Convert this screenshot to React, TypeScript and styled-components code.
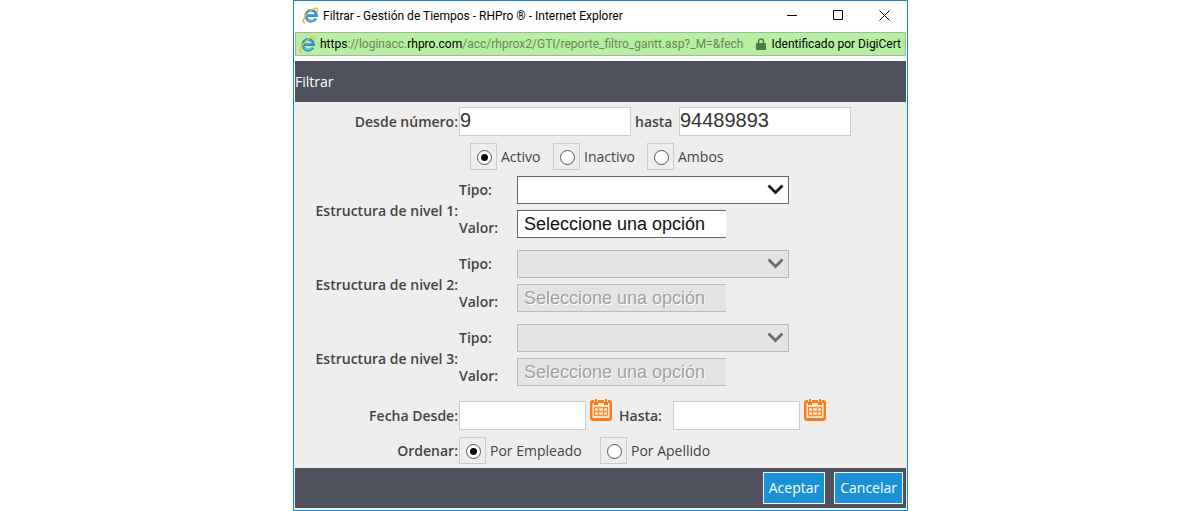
import React, { useState } from "react";
import styled, { createGlobalStyle } from "styled-components";

const chromeFont = `Roboto, "Open Sans", sans-serif`;
const formFont = `"Open Sans", "Noto Sans", sans-serif`;
const fieldFont = `"Liberation Sans", Arial, sans-serif`;

const GlobalStyle = createGlobalStyle`
  *, *::before, *::after { box-sizing: border-box; }
  body { margin: 0; background: #fff; font-family: ${formFont}; color: #444; }
`;

const Page = styled.main`
  display: flex;
  justify-content: center;
  padding-left: 1px;
`;

const Window = styled.div`
  width: 100%;
  max-width: 615px;
  border: 1px solid #1883d7;
  background: #fff;
`;

const TitleBar = styled.header`
  display: flex;
  align-items: center;
  height: 31px;
  padding: 0 13px 2px 8px;
  gap: 4px;
  font-family: ${chromeFont};
`;

const Title = styled.h1`
  flex: 1;
  margin: 0;
  font-size: 12px;
  font-weight: 400;
  line-height: 16px;
  color: #000;
  white-space: nowrap;
  overflow: hidden;
`;

const WindowControls = styled.div`
  display: flex;
  gap: 26px;
`;

const WindowButton = styled.button`
  display: flex;
  align-items: center;
  justify-content: center;
  width: 20px;
  height: 20px;
  padding: 0;
  border: 0;
  background: none;
`;

const AddressBar = styled.div`
  display: flex;
  align-items: center;
  height: 24px;
  margin: 0 1px 5px;
  padding: 0 4px 0 3px;
  gap: 4px;
  border: 1px solid #a9b3a5;
  background: #b4f0a0;
  font-family: ${chromeFont};
  font-size: 12px;
  line-height: 16px;
  color: #000;
  white-space: nowrap;
`;

const Url = styled.span`
  flex: 1;
  color: #6b8464;
`;

const Host = styled.span`
  color: #000;
`;

const Identity = styled.span`
  display: flex;
  align-items: center;
  gap: 6px;
`;

const SectionBar = styled.div`
  display: flex;
  align-items: center;
  height: 41px;
  margin: 0 1px;
  background: #4e525d;
`;

const SectionTitle = styled.h2`
  margin: 0;
  font-size: 14px;
  font-weight: 400;
  line-height: 20px;
  color: #fff;
`;

const Form = styled.form`
  background: #eee;
  padding-bottom: 2px;
`;

const Fields = styled.div`
  display: grid;
  grid-template-columns: 165px 1fr;
  padding: 5px 0 4px;
  font-size: 14px;
  line-height: 20px;
`;

const RowLabel = styled.span<{ $drop?: boolean }>`
  align-self: center;
  padding: ${(p) => (p.$drop ? "8px 1px 0 0" : "0 1px 0 0")};
  font-weight: 600;
  text-align: right;
  white-space: nowrap;
`;

const Row = styled.div<{ $indent?: number }>`
  display: flex;
  align-items: center;
  grid-column: 2;
  margin-left: ${(p) => p.$indent ?? 0}px;
`;

const Spacer = styled.div<{ $size: number }>`
  grid-column: 1 / -1;
  height: ${(p) => p.$size}px;
`;

const TextInput = styled.input<{ $width: number }>`
  width: ${(p) => p.$width}px;
  height: 29px;
  padding: 0 0 3px;
  border: 1px solid #ccc;
  border-radius: 0;
  background: #fff;
  font-family: ${fieldFont};
  font-size: 20px;
  color: #333;
`;

const InlineLabel = styled.label<{ $width: number; $indent: number }>`
  width: ${(p) => p.$width}px;
  padding-left: ${(p) => p.$indent}px;
  font-weight: 600;
`;

const Choice = styled.label<{ $width: number }>`
  display: flex;
  align-items: center;
  width: ${(p) => p.$width}px;
  gap: 4px;
  white-space: nowrap;
`;

const RadioBox = styled.span`
  width: 27px;
  height: 27px;
  flex: none;
  padding: 6px 4px 4px 6px;
  border: 1px solid #ccc;
`;

const Radio = styled.input`
  display: block;
  appearance: none;
  width: 15px;
  height: 15px;
  margin: 0;
  border: 1px solid #555;
  border-radius: 50%;
  background: #fff;
  &:checked {
    background: radial-gradient(circle, #000 0 3px, #fff 4px);
  }
`;

const Level = styled.div`
  display: grid;
  grid-template-columns: 58px minmax(0, 272px);
  row-gap: 6px;
`;

const LevelLabel = styled.label<{ $drop?: boolean }>`
  align-self: center;
  padding-top: ${(p) => (p.$drop ? 8 : 0)}px;
  font-weight: 600;
`;

const SelectWrap = styled.div`
  position: relative;
`;

const Select = styled.select`
  display: block;
  appearance: none;
  width: 100%;
  height: 28px;
  border: 1px solid #666;
  border-radius: 0;
  background: #fff;
  &:disabled {
    border-color: #b9b9b9;
    background: #e4e4e4;
    opacity: 1;
  }
`;

const SelectArrow = styled.svg`
  position: absolute;
  top: 8px;
  right: 5px;
  pointer-events: none;
`;

const ValueSelect = styled(Select)`
  width: 209px;
  padding: 0 6px;
  border-right: 0;
  font-family: ${fieldFont};
  font-size: 18px;
  color: #111;
  &:disabled {
    color: #a0a0a0;
    text-shadow: 1px 1px 0 #fff;
  }
`;

const CalendarButton = styled.button`
  display: block;
  align-self: flex-start;
  width: 22px;
  height: 22px;
  margin: -2px 0 0 4px;
  padding: 0;
  border: 0;
  background: none;
`;

const Footer = styled.footer`
  display: flex;
  justify-content: flex-end;
  height: 40px;
  gap: 9px;
  margin: 0 1px;
  padding: 4px 3px 0 0;
  background: #4e525d;
`;

const Action = styled.button`
  height: 32px;
  padding: 0 5px;
  border: 1px solid #f5f5f5;
  background: #1991d6;
  font-family: ${formFont};
  font-size: 14px;
  line-height: 20px;
  color: #fff;
`;

function BrowserIcon() {
  return (
    <svg width="17" height="17" viewBox="0 0 17 17" fill="none" aria-hidden="true">
      <path d="M14 11.300a5.400 5.400 0 1 1 .600-2.700H4.400" stroke="#2f93dc" strokeWidth="2.800" />
      <path d="M13.500 11a5.200 5.200 0 0 1-8.700.900" stroke="#7cccf5" strokeWidth="1" />
      <path d="M3.200 15.700C.8 16.400.4 14 2.600 10.400 5 6.500 9.800 2.200 13.400 1.300c2.400-.6 2.900 1.300 1.800 3.500" stroke="#f0b92c" strokeWidth="1.500" />
    </svg>
  );
}

function LockIcon() {
  return (
    <svg width="10" height="12" viewBox="0 0 10 12" aria-hidden="true">
      <path d="M2.500 5.500V3.500a2.500 2.500 0 0 1 5 0v2" fill="none" stroke="#4f7847" strokeWidth="1.500" />
      <rect y="5" width="10" height="7" rx="1" fill="#4f7847" />
    </svg>
  );
}

function CalendarIcon() {
  return (
    <svg width="22" height="22" viewBox="0 0 22 22" aria-hidden="true">
      <rect y="1" width="22" height="21" rx="3" fill="#ff7a14" />
      <path d="M2.500 4h17v15h-17z" fill="#fff1e4" />
      <path d="M4 0h4v6H4zM14 0h4v6h-4z" fill="#ff7a14" />
      <path d="M4 0h1v3H4zM7 0h1v3H7zM14 0h1v3h-1zM17 0h1v3h-1z" fill="#ffe6d0" />
      <path d="M4.500 8.500h13v8h-13zM4.500 12.500h13M8.500 8.500v8M13.500 8.500v8" fill="none" stroke="#ff8a30" strokeWidth="1.300" />
    </svg>
  );
}

function Arrow({ color }: { color: string }) {
  return (
    <SelectArrow width="17" height="13" viewBox="0 0 17 13" aria-hidden="true">
      <path d="M1.500 1.500l7 7 7-7" fill="none" stroke={color} strokeWidth="2.800" />
    </SelectArrow>
  );
}

function RadioChoice(props: { name: string; text: string; width: number; checked: boolean; onSelect: () => void }) {
  return (
    <Choice $width={props.width}>
      <RadioBox>
        <Radio type="radio" name={props.name} checked={props.checked} onChange={props.onSelect} />
      </RadioBox>
      {props.text}
    </Choice>
  );
}

function LevelFields({ level, disabled }: { level: number; disabled: boolean }) {
  return (
    <>
      <RowLabel $drop>Estructura de nivel {level}:</RowLabel>
      <Level>
        <LevelLabel htmlFor={`tipo-${level}`}>Tipo:</LevelLabel>
        <SelectWrap>
          <Select id={`tipo-${level}`} disabled={disabled}>
            <option value="" />
          </Select>
          <Arrow color={disabled ? "#6e6e6e" : "#1a1a1a"} />
        </SelectWrap>
        <LevelLabel $drop htmlFor={`valor-${level}`}>Valor:</LevelLabel>
        <ValueSelect id={`valor-${level}`} disabled={disabled}>
          <option>Seleccione una opción</option>
        </ValueSelect>
      </Level>
    </>
  );
}

export default function App() {
  const [status, setStatus] = useState("Activo");
  const [order, setOrder] = useState("Por Empleado");

  return (
    <Page>
      <GlobalStyle />
      <Window>
        <TitleBar>
          <BrowserIcon />
          <Title>Filtrar - Gestión de Tiempos - RHPro ® - Internet Explorer</Title>
          <WindowControls>
            <WindowButton type="button" aria-label="Minimizar">
              <svg width="11" height="11" stroke="#000"><path d="M0 5.500h10" /></svg>
            </WindowButton>
            <WindowButton type="button" aria-label="Maximizar">
              <svg width="11" height="11" stroke="#000" fill="none"><path d="M.5.5h9v9h-9z" /></svg>
            </WindowButton>
            <WindowButton type="button" aria-label="Cerrar">
              <svg width="11" height="11" stroke="#000"><path d="M.5.5l10 10M10.500.5l-10 10" /></svg>
            </WindowButton>
          </WindowControls>
        </TitleBar>
        <AddressBar>
          <BrowserIcon />
          <Url>
            <Host>https</Host>://loginacc.<Host>rhpro.com</Host>/acc/rhprox2/GTI/reporte_filtro_gantt.asp?_M=&amp;fech
          </Url>
          <Identity>
            <LockIcon />
            Identificado por DigiCert
          </Identity>
        </AddressBar>
        <SectionBar>
          <SectionTitle>Filtrar</SectionTitle>
        </SectionBar>
        <Form onSubmit={(e) => e.preventDefault()}>
          <Fields>
            <RowLabel as="label" htmlFor="desde">Desde número:</RowLabel>
            <Row>
              <TextInput id="desde" $width={172} defaultValue="9" />
              <InlineLabel htmlFor="hasta" $width={48} $indent={4}>hasta</InlineLabel>
              <TextInput id="hasta" $width={172} defaultValue="94489893" />
            </Row>
            <Spacer $size={7} />
            <Row $indent={11}>
              <RadioChoice name="estado" text="Activo" width={83} checked={status === "Activo"} onSelect={() => setStatus("Activo")} />
              <RadioChoice name="estado" text="Inactivo" width={94} checked={status === "Inactivo"} onSelect={() => setStatus("Inactivo")} />
              <RadioChoice name="estado" text="Ambos" width={94} checked={status === "Ambos"} onSelect={() => setStatus("Ambos")} />
            </Row>
            <Spacer $size={6} />
            <LevelFields level={1} disabled={false} />
            <Spacer $size={12} />
            <LevelFields level={2} disabled />
            <Spacer $size={12} />
            <LevelFields level={3} disabled />
            <Spacer $size={15} />
            <RowLabel as="label" htmlFor="fecha-desde">Fecha Desde:</RowLabel>
            <Row>
              <TextInput id="fecha-desde" $width={127} />
              <CalendarButton type="button" aria-label="Elegir fecha desde"><CalendarIcon /></CalendarButton>
              <InlineLabel htmlFor="fecha-hasta" $width={61} $indent={7}>Hasta:</InlineLabel>
              <TextInput id="fecha-hasta" $width={127} />
              <CalendarButton type="button" aria-label="Elegir fecha hasta"><CalendarIcon /></CalendarButton>
            </Row>
            <Spacer $size={7} />
            <RowLabel>Ordenar:</RowLabel>
            <Row>
              <RadioChoice name="orden" text="Por Empleado" width={141} checked={order === "Por Empleado"} onSelect={() => setOrder("Por Empleado")} />
              <RadioChoice name="orden" text="Por Apellido" width={141} checked={order === "Por Apellido"} onSelect={() => setOrder("Por Apellido")} />
            </Row>
          </Fields>
          <Footer>
            <Action type="submit">Aceptar</Action>
            <Action type="button">Cancelar</Action>
          </Footer>
        </Form>
      </Window>
    </Page>
  );
}
